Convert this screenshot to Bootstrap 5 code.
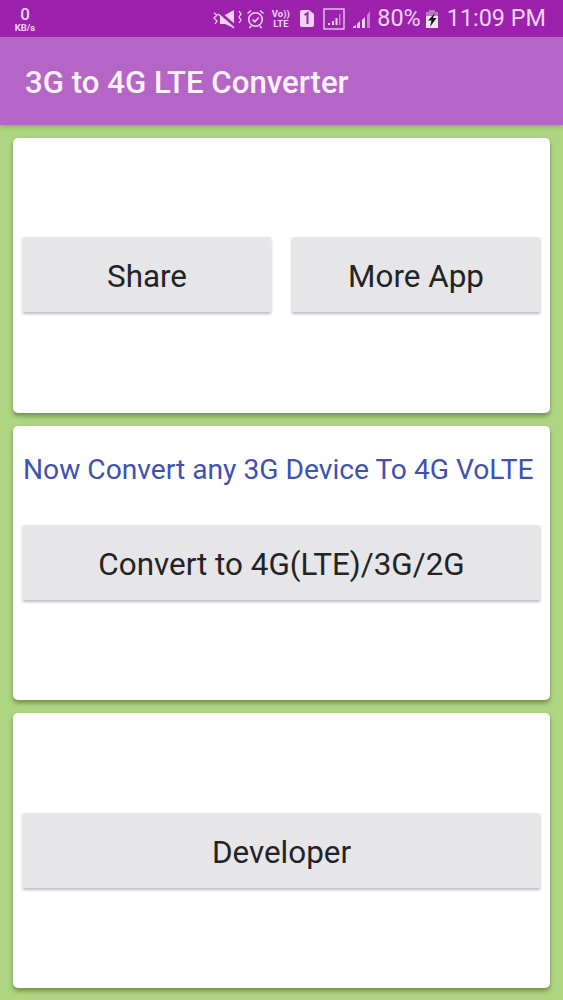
<!doctype html>
<html lang="en">
<head>
<meta charset="utf-8">
<title>3G to 4G LTE Converter</title>
<link rel="stylesheet" href="https://cdn.jsdelivr.net/npm/bootstrap@5.3.0/dist/css/bootstrap.min.css">
<style>
html,body{height:1000px;overflow:hidden}
body{background:#aed581;font-family:Roboto,"Liberation Sans",sans-serif;color:#232325}
.sbar{height:37px;background:#9c22ae;color:#eed3f3;padding:0 17px 0 14px}
.kb{width:22px;text-align:center;font-weight:500;padding-top:1px}
.kb b{display:block;font-size:17px;line-height:18px;font-weight:500}
.kb i{display:block;font-size:9.500px;line-height:10px;font-style:normal;font-weight:700}
.sright svg{display:block;flex:none}
.pct{font-size:23.400px;line-height:1;margin-left:5px}
.clock{font-size:23.400px;line-height:1;margin-left:8px}
.vol{font-size:9.500px;font-weight:700;line-height:10px;width:19px;text-align:center;margin:0 9px 0 6px;white-space:nowrap}
.abar{height:88px;background:#b565c6;color:#fbf1fd;padding:0 25px;box-shadow:0 2px 4px rgba(90,120,50,.4)}
.abar h1{font-size:31.200px;font-weight:500;margin:0;line-height:1;padding-top:4px}
.stack{padding:13px 13px 0;gap:13px}
.pane{height:274.500px;background:#fff;border:0;border-radius:5px;padding:0 10px;box-shadow:0 3px 4px rgba(70,90,40,.55)}
.pbtn{height:75px;background:#e6e5e8;border:0;border-radius:1px;color:#232325;font-size:31.400px;line-height:1;padding:5px 0 0;box-shadow:0 2px 3px rgba(60,60,70,.35);width:100%}
.pbtn:hover{background:#e6e5e8;color:#232325}
.half{gap:21px;padding-top:99px}
.headline{color:#3f51b5;font-size:28.200px;line-height:1;white-space:nowrap;padding-top:30px;margin:0 0 41px}
.single{padding-top:100px}
.sig{margin-left:7px}
.mute{margin-right:1px}
</style>
</head>
<body>
<div class="sbar d-flex align-items-center justify-content-between">
  <div class="kb"><b>0</b><i>KB/s</i></div>
  <div class="sright d-flex align-items-center">
    <svg width="30" height="22" viewBox="0 0 30 22" fill="none" stroke="#eed3f3"><path d="M2 5l3 2-3 3 3 3-2 3M27 3l2 3-2 3 2 3-2 3" stroke-width="1.300"/><path d="M8 7h5l9-5v18l-9-4H8z" fill="#eed3f3" stroke="none"/><path d="M7 4l17 15" stroke="#9c22ae" stroke-width="3"/><path d="M6 6l16 14" stroke-width="1.300"/></svg>
    <svg class="ms-1" width="19" height="21" viewBox="0 0 19 21" fill="none" stroke="#eed3f3" stroke-width="1.600"><circle cx="9.500" cy="11.500" r="6.800"/><path d="M6.500 11.500l2.300 2.300 4-4.300M1.500 5.500L5 2.500M17.500 5.500L14 2.500M5 18l-1.500 2M14 18l1.500 2"/></svg>
    <div class="vol">Vo&#x29;&#x29;<br>LTE</div>
    <svg width="16" height="19" viewBox="0 0 16 19"><path d="M1 3a2 2 0 0 1 2-2h7l5 4v11a2 2 0 0 1-2 2H3a2 2 0 0 1-2-2z" fill="#eed3f3"/><path d="M5.500 6l3-2V15" fill="none" stroke="#9c22ae" stroke-width="2"/></svg>
    <svg class="ms-2" width="22" height="22" viewBox="0 0 22 22"><rect x="1" y="1" width="20" height="20" fill="none" stroke="#eed3f3" stroke-width="1.300"/><path d="M5 17h2v-2H5zM9 17h2v-4H9zM12.500 17h2v-7h-2z" fill="#eed3f3"/><path d="M16 17h1.500V6H16z" fill="#c77fd6"/></svg>
    <svg class="sig" width="20" height="20" viewBox="0 0 20 20"><path d="M1 19h3v-3L1 18zM5 19h3v-7l-3 3zM10 19h3V8l-3 3z" fill="#eed3f3"/><path d="M15 19h3V2l-3 4z" fill="#c77fd6"/></svg>
    <span class="pct">80%</span>
    <svg class="ms-1" width="14" height="20" viewBox="0 0 14 20"><path d="M4 1h6v2h3v16H1V3h3z" fill="#f3e4f6"/><path d="M1 3h12v4H1zM4 1h6v2H4z" fill="#b978c8"/><path d="M10 4L3 11.500h3.500L5 18l6.500-9H8z" fill="#241326"/></svg>
    <span class="clock">11:09 PM</span>
  </div>
</div>
<header class="abar d-flex align-items-center"><h1>3G to 4G LTE Converter</h1></header>
<main class="stack d-flex flex-column">
  <section class="pane card">
    <div class="half d-flex">
      <button class="pbtn btn" type="button">Share</button>
      <button class="pbtn btn" type="button">More App</button>
    </div>
  </section>
  <section class="pane card">
    <p class="headline">Now Convert any 3G Device To 4G VoLTE</p>
    <button class="pbtn btn" type="button">Convert to 4G(LTE)/3G/2G</button>
  </section>
  <section class="pane card">
    <div class="single"><button class="pbtn btn" type="button">Developer</button></div>
  </section>
</main>
<script src="https://cdn.jsdelivr.net/npm/bootstrap@5.3.0/dist/js/bootstrap.bundle.min.js"></script>
</body>
</html>
